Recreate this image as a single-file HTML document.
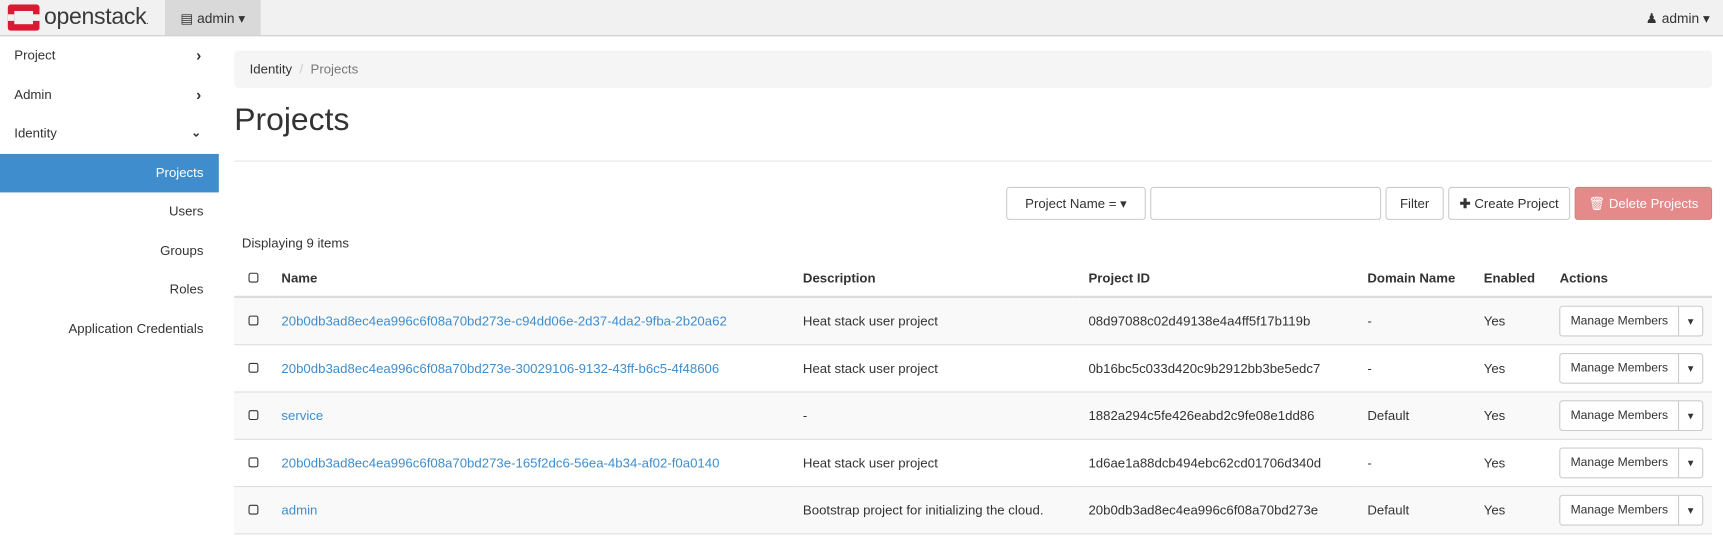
<!DOCTYPE html>
<html><head><meta charset="utf-8"><style>
*{box-sizing:border-box}
html,body{margin:0;width:1723px;height:537px;overflow:hidden;background:#fff}
#w{position:absolute;left:0;top:0;width:1567px;height:489px;transform:scale(1.0996);transform-origin:0 0;font-family:"Liberation Sans",sans-serif;font-size:12px;color:#333}
.top{position:absolute;left:0;top:0;width:1567px;height:33px;background:#f1f1f1;border-bottom:1px solid #ccc}
.logo{position:absolute;left:7px;top:4px}
.logotxt{position:absolute;left:40px;top:4px;font-size:21px;color:#3a3a3a;letter-spacing:-0.3px}
.proj{position:absolute;left:150px;top:0;width:87px;height:32px;background:#d9d9d9;font-size:12.5px;padding:9px 0 0 14px}
.user{position:absolute;right:12px;top:9px;font-size:12.5px}
.side{position:absolute;left:0;top:33px;width:199px}
.si{height:35.5px;line-height:34px;padding-left:13px;font-size:12px;position:relative}
.si .ch{position:absolute;right:16px;top:0;font-size:14px;font-weight:bold}
.sub{text-align:right;padding-right:14px}
.act{background:#3f8dcd;color:#fff}
.bc{position:absolute;left:213px;top:46px;width:1344px;height:34px;background:#f5f5f5;border-radius:4px;padding:10px 14px;font-size:12px}
h1{position:absolute;left:213px;top:93px;margin:0;font-weight:normal;font-size:29px;color:#333}
.hr{position:absolute;left:213px;top:146px;width:1344px;border-top:1px solid #e5e5e5}
.btn{position:absolute;top:170px;height:30px;border:1px solid #ccc;border-radius:3px;background:#fff;font-size:12px;line-height:28px;text-align:center;color:#333;white-space:nowrap}
.disp{position:absolute;left:220px;top:214px;font-size:12px}
table{position:absolute;left:213px;top:236px;width:1344px;border-collapse:collapse;font-size:12px}
th{text-align:left;font-weight:bold;height:34px;border-bottom:2px solid #ddd;padding:0 8px;white-space:nowrap}
td{height:43px;border-bottom:1px solid #ddd;padding:0 8px;white-space:nowrap}
tr.s td{background:#f9f9f9}
a{color:#3f8dcd;text-decoration:none}
.cb{display:inline-block;width:9px;height:9px;border:1px solid #333;border-radius:2px;margin-left:5px}
.mm{display:inline-block;border:1px solid #ccc;border-radius:3px;height:28px;line-height:26px;font-size:11px;background:#fff;vertical-align:middle;white-space:nowrap}
.mm span{display:inline-block;padding:0 9px}
.mm b{display:inline-block;border-left:1px solid #ccc;width:22px;text-align:center;font-size:9px}
</style></head><body><div id="w">
<div class="top">
<svg class="logo" width="29" height="24" viewBox="0 0 29 24"><rect x="0" y="0" width="29" height="24" rx="3" fill="#da1a32"/><rect x="6" y="6" width="17" height="12" fill="#f1f1f1"/><rect x="0" y="9" width="6" height="6" fill="#f1f1f1"/><rect x="23" y="9" width="6" height="6" fill="#f1f1f1"/></svg>
<div class="logotxt">openstack<span style="font-size:8px">.</span></div>
<div class="proj">&#9636; admin &#9662;</div>
<div class="user">&#9823; admin &#9662;</div>
</div>
<div class="side">
<div class="si">Project<span class="ch">&#8250;</span></div>
<div class="si">Admin<span class="ch">&#8250;</span></div>
<div class="si">Identity<span class="ch" style="font-size:11px">&#8964;</span></div>
<div class="si sub act">Projects</div>
<div class="si sub">Users</div>
<div class="si sub">Groups</div>
<div class="si sub">Roles</div>
<div class="si sub">Application Credentials</div>
</div>
<div class="bc">Identity <span style="color:#ccc">&nbsp;/&nbsp;</span> <span style="color:#777">Projects</span></div>
<h1>Projects</h1>
<div class="hr"></div>
<div class="btn" style="left:915px;width:127px">Project Name = &#9662;</div>
<div class="btn" style="left:1046px;width:210px"></div>
<div class="btn" style="left:1260px;width:53px">Filter</div>
<div class="btn" style="left:1317px;width:111px"><b>&#10010;</b> Create Project</div>
<div class="btn" style="left:1432px;width:125px;background:#e48a8a;border-color:#df7b7b;color:#fff">&#128465; Delete Projects</div>
<div class="disp">Displaying 9 items</div>
<table>
<tr><th style="width:35px"><span class="cb"></span></th><th style="width:475px">Name</th><th style="width:260px">Description</th><th style="width:254px">Project ID</th><th style="width:106px">Domain Name</th><th style="width:69px">Enabled</th><th>Actions</th></tr>
<tr class="s"><td><span class="cb"></span></td><td><a>20b0db3ad8ec4ea996c6f08a70bd273e-c94dd06e-2d37-4da2-9fba-2b20a62</a></td><td>Heat stack user project</td><td>08d97088c02d49138e4a4ff5f17b119b</td><td>-</td><td>Yes</td><td><span class="mm"><span>Manage Members</span><b>&#9662;</b></span></td></tr>
<tr><td><span class="cb"></span></td><td><a>20b0db3ad8ec4ea996c6f08a70bd273e-30029106-9132-43ff-b6c5-4f48606</a></td><td>Heat stack user project</td><td>0b16bc5c033d420c9b2912bb3be5edc7</td><td>-</td><td>Yes</td><td><span class="mm"><span>Manage Members</span><b>&#9662;</b></span></td></tr>
<tr class="s"><td><span class="cb"></span></td><td><a>service</a></td><td>-</td><td>1882a294c5fe426eabd2c9fe08e1dd86</td><td>Default</td><td>Yes</td><td><span class="mm"><span>Manage Members</span><b>&#9662;</b></span></td></tr>
<tr><td><span class="cb"></span></td><td><a>20b0db3ad8ec4ea996c6f08a70bd273e-165f2dc6-56ea-4b34-af02-f0a0140</a></td><td>Heat stack user project</td><td>1d6ae1a88dcb494ebc62cd01706d340d</td><td>-</td><td>Yes</td><td><span class="mm"><span>Manage Members</span><b>&#9662;</b></span></td></tr>
<tr class="s"><td><span class="cb"></span></td><td><a>admin</a></td><td>Bootstrap project for initializing the cloud.</td><td>20b0db3ad8ec4ea996c6f08a70bd273e</td><td>Default</td><td>Yes</td><td><span class="mm"><span>Manage Members</span><b>&#9662;</b></span></td></tr>
</table>
</div></body></html>
